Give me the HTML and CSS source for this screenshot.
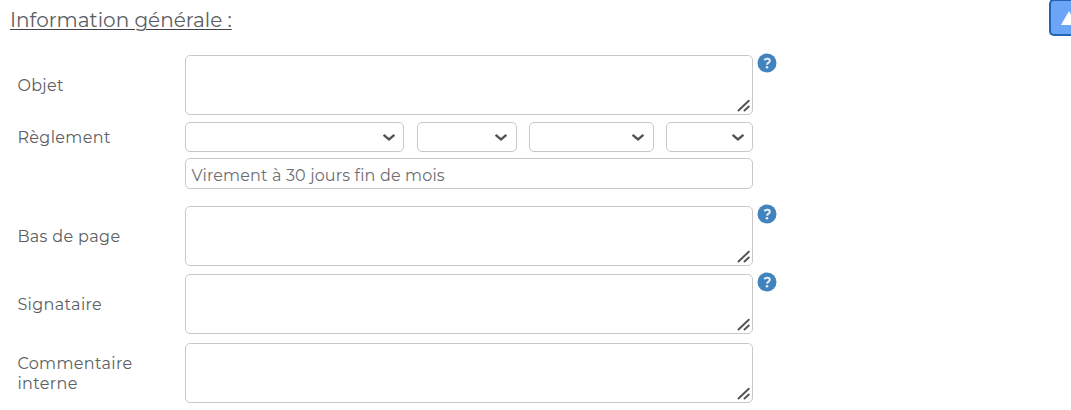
FILE: index.html
```html
<!DOCTYPE html>
<html lang="fr">
<head>
<meta charset="utf-8">
<title>Information générale</title>
<link rel="stylesheet" href="styles.css">
</head>
<body>
<svg class="defs" aria-hidden="true">
  <symbol id="chevron" viewBox="0 0 14 9"><path d="M1.6 1.9 7 6.5l5.4-4.6" fill="none" stroke="#505459" stroke-width="2.4"/></symbol>
  <symbol id="grip" viewBox="0 0 14 13"><path d="M1.5 11.5 11.8 1.7M7.5 11.5l4.3-4" fill="none" stroke="#505256" stroke-width="1.9" stroke-linecap="round"/></symbol>
  <symbol id="help" viewBox="0 0 20 20"><circle cx="10" cy="10" r="9.5" fill="#4083bd"/><path d="M7.3 7.2C8.5 5.2 12.8 5.1 12.8 7.7c0 2-2.7 1.8-2.7 4" fill="none" stroke="#e4edf5" stroke-width="2"/><circle cx="10" cy="14.3" r="1.3" fill="#e4edf5"/></symbol>
</svg>
<header class="header">
  <h2 class="title"><span>Information générale :</span></h2>
  <button class="top" aria-label="Haut"><svg width="24" height="14" viewBox="0 0 24 14"><path d="M0 14 8 0l8 14z" fill="#fff"/></svg></button>
</header>
<main class="form">
  <div class="row">
    <label class="label">Objet</label>
    <div class="area"><textarea class="control"></textarea><svg class="grip"><use href="#grip"/></svg></div>
    <svg class="help"><use href="#help"/></svg>
  </div>
  <div class="row payment">
    <label class="label">Règlement</label>
    <div class="fields">
      <div class="selects">
        <div class="select"><select class="control"></select><svg class="chevron"><use href="#chevron"/></svg></div>
        <div class="select"><select class="control"></select><svg class="chevron"><use href="#chevron"/></svg></div>
        <div class="select"><select class="control"></select><svg class="chevron"><use href="#chevron"/></svg></div>
        <div class="select"><select class="control"></select><svg class="chevron"><use href="#chevron"/></svg></div>
      </div>
      <input class="control terms" value="Virement à 30 jours fin de mois">
    </div>
  </div>
  <div class="row">
    <label class="label low">Bas de page</label>
    <div class="area"><textarea class="control"></textarea><svg class="grip"><use href="#grip"/></svg></div>
    <svg class="help"><use href="#help"/></svg>
  </div>
  <div class="row">
    <label class="label">Signataire</label>
    <div class="area"><textarea class="control"></textarea><svg class="grip"><use href="#grip"/></svg></div>
    <svg class="help"><use href="#help"/></svg>
  </div>
  <div class="row">
    <label class="label low">Commentaire<br>interne</label>
    <div class="area"><textarea class="control"></textarea><svg class="grip"><use href="#grip"/></svg></div>
  </div>
</main>
</body>
</html>
```
FILE: styles.css
```css
* { box-sizing: border-box; }
body {
  margin: 0;
  height: 410px;
  overflow: hidden;
  background: #fff;
  color: #5b5e63;
  font-family: Montserrat, Inter, sans-serif;
  font-weight: 400;
}
.defs { position: absolute; width: 0; height: 0; }
.header {
  display: flex;
  justify-content: space-between;
  height: 55px;
  padding-left: 10px;
}
.title {
  margin: 7px 0 0;
  font-size: 20px;
  line-height: 26px;
  font-weight: 400;
  white-space: nowrap;
}
.title span {
  text-decoration: underline #3f4246;
  text-decoration-thickness: 1px;
  text-underline-offset: 2px;
}
.top {
  width: 22px;
  height: 37px;
  margin-top: -1px;
  padding: 4px 0 0 10px;
  overflow: hidden;
  border: 2px solid #2265b0;
  border-right: 0;
  border-radius: 5px 0 0 5px;
  background: #6ba5f8;
}
.form {
  display: flex;
  flex-direction: column;
  gap: 8.5px;
  padding-left: 17.4px;
}
.row {
  display: flex;
  align-items: center;
  height: 60px;
}
.payment {
  align-items: flex-start;
  height: 67px;
  margin: -1.5px 0 8px;
}
.label {
  flex: none;
  width: 168px;
  padding-top: 1px;
  font-size: 16px;
  line-height: 20px;
  letter-spacing: .36px;
}
.label.low { padding-top: 2px; }
.payment .label { padding-top: 6px; }
.area { position: relative; width: 568px; height: 60px; }
.control {
  display: block;
  width: 100%;
  height: 100%;
  margin: 0;
  border: 1px solid #c8c8ca;
  border-radius: 5px;
  background: #fff;
  color: #6c6e73;
  font: inherit;
  resize: none;
  appearance: none;
  outline: 0;
}
.grip { position: absolute; right: 2.5px; bottom: 3px; width: 14px; height: 13px; }
.help { align-self: flex-start; width: 20px; height: 20px; margin: -2px 0 0 4px; }
.fields { width: 568px; }
.selects {
  display: grid;
  grid-template-columns: 219px 99.5px 124.5px 87px;
  justify-content: space-between;
  height: 30px;
  margin-bottom: 6px;
}
.select { position: relative; }
.chevron { position: absolute; right: 8.5px; top: 11px; width: 14px; height: 9px; }
.terms {
  height: 31px;
  padding: 3px 5px 0;
  font-size: 16px;
  letter-spacing: .15px;
}
```
